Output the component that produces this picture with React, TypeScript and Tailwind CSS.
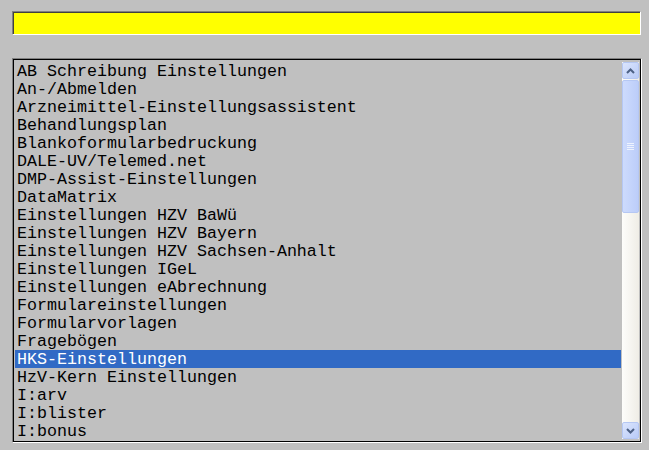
const items = [
  'AB Schreibung Einstellungen',
  'An-/Abmelden',
  'Arzneimittel-Einstellungsassistent',
  'Behandlungsplan',
  'Blankoformularbedruckung',
  'DALE-UV/Telemed.net',
  'DMP-Assist-Einstellungen',
  'DataMatrix',
  'Einstellungen HZV BaWü',
  'Einstellungen HZV Bayern',
  'Einstellungen HZV Sachsen-Anhalt',
  'Einstellungen IGeL',
  'Einstellungen eAbrechnung',
  'Formulareinstellungen',
  'Formularvorlagen',
  'Fragebögen',
  'HKS-Einstellungen',
  'HzV-Kern Einstellungen',
  'I:arv',
  'I:blister',
  'I:bonus',
];

const selected = 16;

const Arrow = ({ down }: { down?: boolean }) => (
  <svg width="9" height="6" viewBox="0 0 9 6" className={down ? 'rotate-180' : ''}>
    <path d="M1 5 L4.5 1.5 L8 5" fill="none" stroke="#4d6185" strokeWidth="2" />
  </svg>
);

const ScrollBar = () => (
  <div className="w-[17px] h-[377px] flex flex-col bg-gradient-to-r from-[#fdfdfb] to-[#efede6]">
    <div className="h-[17px] rounded-[2px] border border-[#b5c7f3] bg-gradient-to-br from-[#dbe5fd] to-[#b9cbf7] flex items-center justify-center">
      <Arrow />
    </div>
    <div className="mt-[1px] h-[133px] rounded-[2px] border border-[#b5c7f3] bg-gradient-to-r from-[#cddbfd] to-[#bccdf9] flex flex-col items-center justify-center gap-[1px]">
      <div className="w-[7px] h-[1px] bg-[#eef3fe]" />
      <div className="w-[7px] h-[1px] bg-[#eef3fe]" />
      <div className="w-[7px] h-[1px] bg-[#eef3fe]" />
      <div className="w-[7px] h-[1px] bg-[#eef3fe]" />
    </div>
    <div className="flex-1" />
    <div className="h-[17px] rounded-[2px] border border-[#b5c7f3] bg-gradient-to-br from-[#dbe5fd] to-[#b9cbf7] flex items-center justify-center">
      <Arrow down />
    </div>
  </div>
);

export default function App() {
  return (
    <div className="w-[649px] h-[450px] bg-[#c0c0c0] pt-[11px] pl-[12px] overflow-hidden">
      <div className="w-[629px] h-[24px] border-t border-l border-[#808080] border-b border-r border-b-white border-r-white">
        <div className="w-full h-full bg-[#ffff00] border-t border-l border-[#404040]" />
      </div>

      <div className="mt-[23px] w-[630px] h-[385px] border-t border-l border-[#808080] border-b border-r border-b-white border-r-white">
        <div className="w-full h-full border border-black flex pt-[2px] pl-[1px]">
          <ul
            className="w-[606px] text-[16.67px] leading-[18px] text-black"
            style={{ fontFamily: '"Liberation Mono", "Courier New", monospace' }}
          >
            {items.map((item, index) => (
              <li
                key={index}
                className={
                  index === selected
                    ? 'h-[18px] pt-[1px] pl-[2px] whitespace-pre bg-[#316ac5] text-white'
                    : 'h-[18px] pt-[1px] pl-[2px] whitespace-pre'
                }
              >
                {item}
              </li>
            ))}
          </ul>
          <div className="w-[1px]" />
          <ScrollBar />
        </div>
      </div>
    </div>
  );
}
